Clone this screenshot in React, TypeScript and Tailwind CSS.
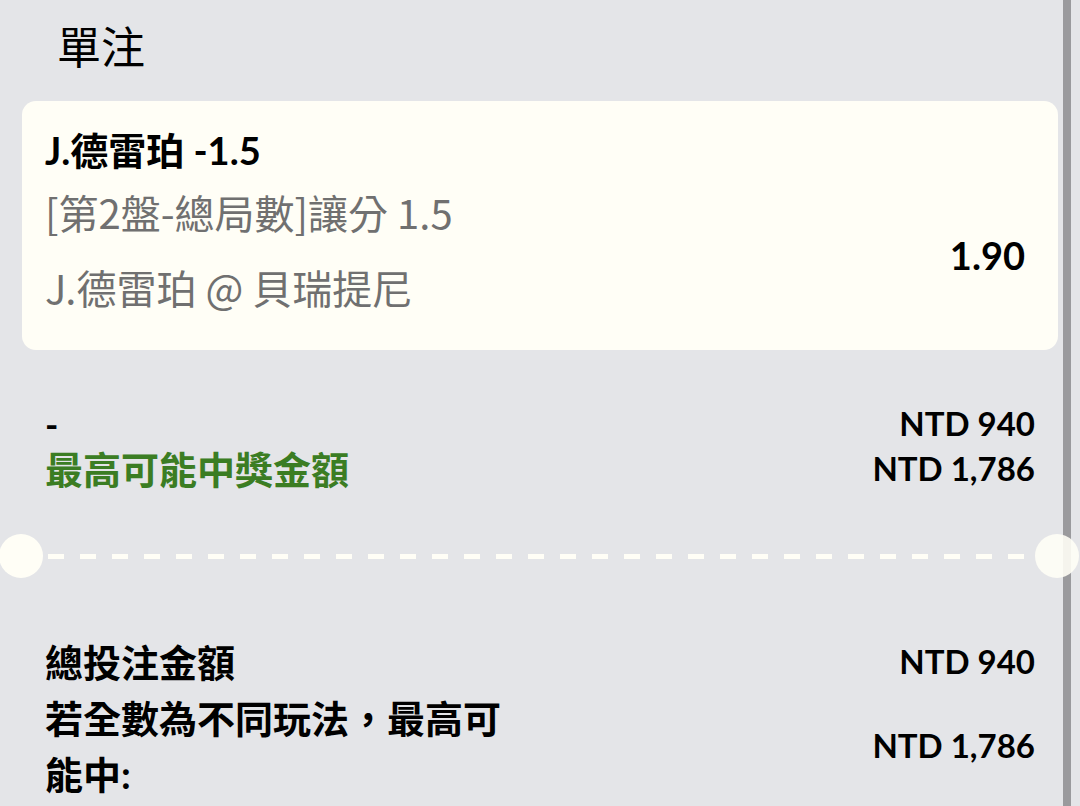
export default function App() {
  return (
    <div className="relative flex h-[806px] w-[1080px] overflow-hidden bg-[#e4e5e8] text-black [font-family:Lato,'Noto_Sans_CJK_TC',sans-serif]">
      <div className="flex w-[1063px] flex-col">
        {/* Header */}
        <h1 className="h-[101px] pl-[57px] pt-[17px] text-[44px] font-normal leading-[60px]">單注</h1>

        {/* Bet card */}
        <div className="ml-[22px] mr-[5px] flex h-[249px] items-start justify-between rounded-[14px] bg-[#fffef6] pl-[23px] pr-[33px]">
          <div className="flex flex-col pt-[25px]">
            <div className="mb-[14px] text-[38px] font-bold leading-[48px]">J.德雷珀 -1.5</div>
            <div className="mb-[27px] text-[40px] leading-[48px] text-[#707070] [font-family:'Noto_Sans_CJK_TC',sans-serif]">
              [第2盤-總局數]讓分 1.5
            </div>
            <div className="text-[40px] leading-[48px] text-[#707070] [font-family:'Noto_Sans_CJK_TC',sans-serif]">
              J.德雷珀 @ 貝瑞提尼
            </div>
          </div>
          <div className="pt-[130px] text-[38px] font-bold leading-[48px]">1.90</div>
        </div>

        {/* Stake rows */}
        <div className="flex flex-col px-[45px] pt-[52px] pr-[28px]">
          <div className="flex h-[44px] items-center justify-between">
            <span className="text-[36px] font-bold">-</span>
            <span className="text-[33px] font-bold">NTD 940</span>
          </div>
          <div className="flex h-[46px] items-center justify-between">
            <span className="text-[38px] font-bold text-[#3b7d23]">最高可能中獎金額</span>
            <span className="text-[33px] font-bold">NTD 1,786</span>
          </div>
        </div>

        {/* Separator */}
        <div className="relative mt-[42px] flex h-[44px] items-center">
          <div className="absolute left-[-1px] top-0 h-[44px] w-[44px] rounded-full bg-[#fffef6]" />
          <div className="ml-[48px] h-[5px] w-[982px] bg-[repeating-linear-gradient(90deg,#fffef6_0_16px,transparent_16px_32px)]" />
          <div className="absolute left-[1035px] top-0 z-10 h-[44px] w-[44px] rounded-full bg-[#fffef6]/90" />
        </div>

        {/* Totals */}
        <div className="flex flex-col px-[45px] pt-[56px] pr-[28px]">
          <div className="flex h-[56px] items-center justify-between">
            <span className="text-[38px] font-bold">總投注金額</span>
            <span className="text-[33px] font-bold">NTD 940</span>
          </div>
          <div className="flex items-center justify-between">
            <span className="max-w-[480px] text-[38px] font-bold leading-[56px]">若全數為不同玩法，最高可能中:</span>
            <span className="text-[33px] font-bold">NTD 1,786</span>
          </div>
        </div>
      </div>
      <div className="w-[8px] bg-[#9a9a9d]" />
      <div className="flex-1" />
    </div>
  );
}
